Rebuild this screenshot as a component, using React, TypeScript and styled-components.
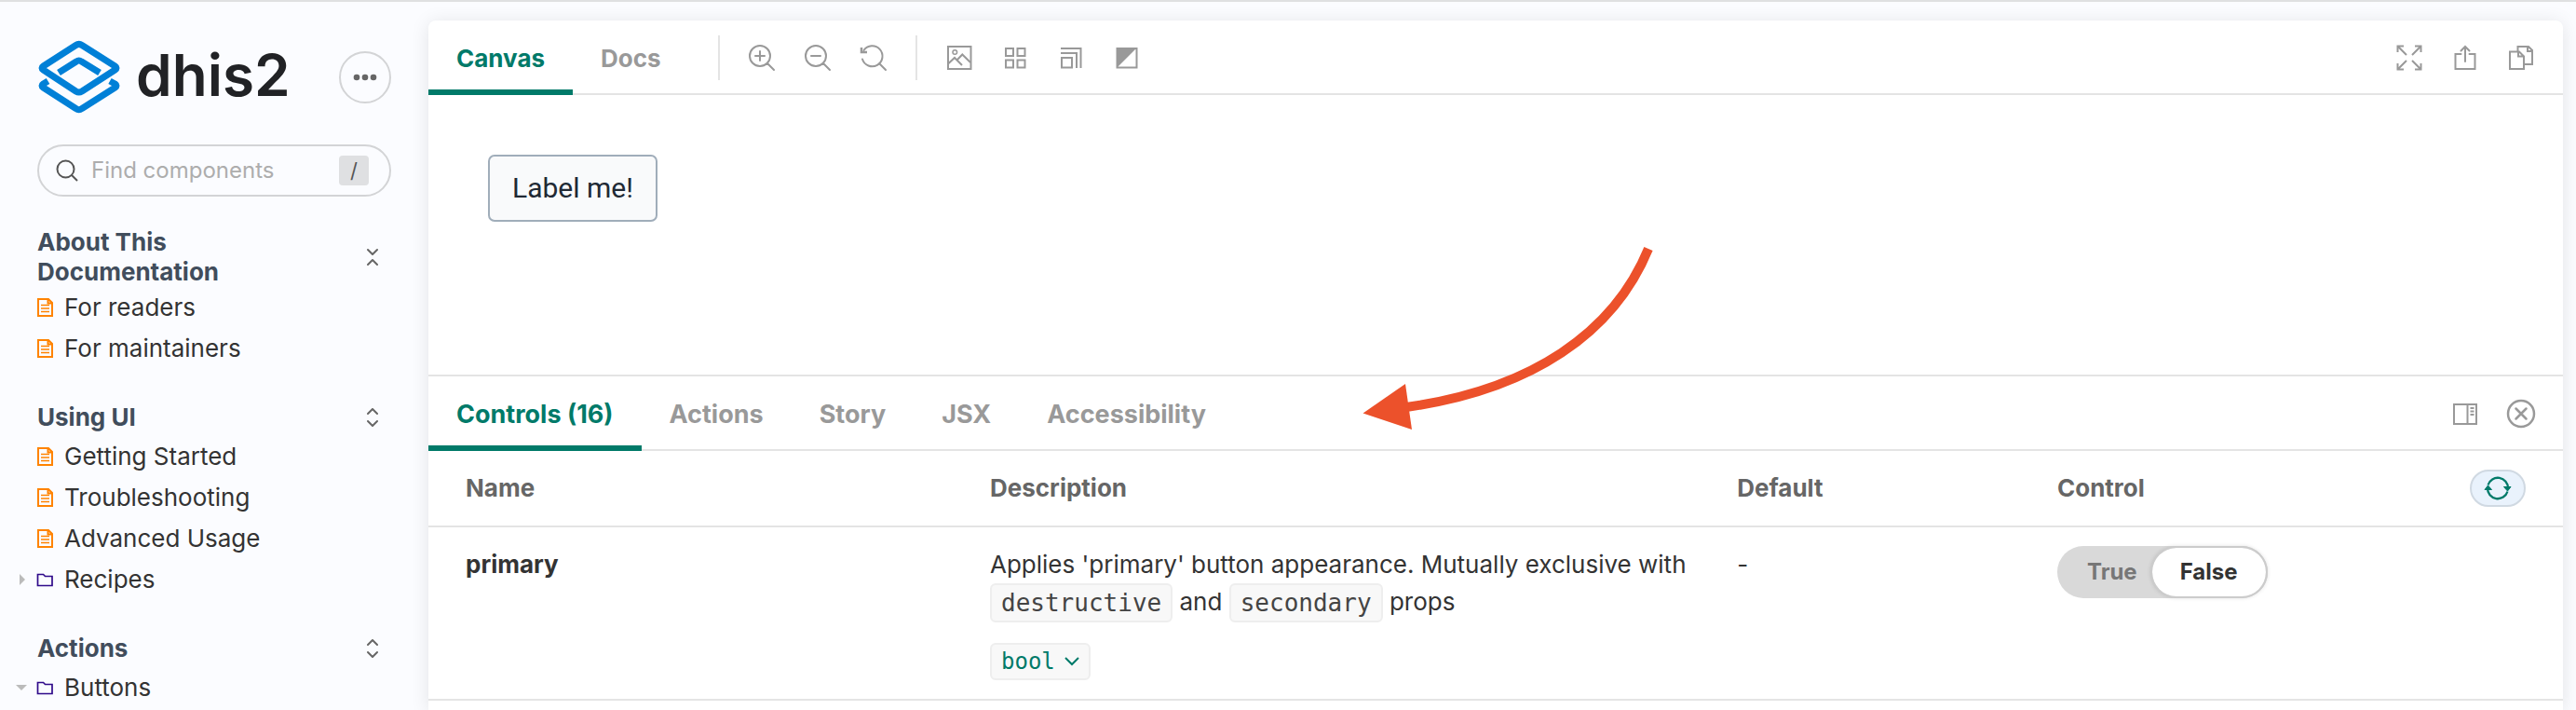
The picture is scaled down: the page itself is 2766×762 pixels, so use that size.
import React from 'react';
import styled, { createGlobalStyle, css } from 'styled-components';

const color = {
  page: '#fbfcff',
  line: '#e4e4e4',
  accent: '#007a69',
  muted: '#999999',
  text: '#333333',
  heading: '#414d5c',
};
const sans = `Inter, "Liberation Sans", sans-serif`;
const mono = `"DejaVu Sans Mono", "Liberation Mono", monospace`;

const GlobalStyle = createGlobalStyle`
  *, *::before, *::after { box-sizing: border-box; }
  body {
    margin: 0;
    background: ${color.page};
    color: ${color.text};
    font-family: ${sans};
    font-size: 26px;
    line-height: 40px;
  }
  button, input { font: inherit; }
  button { cursor: pointer; }
`;

const Shell = styled.div`
  display: flex;
  min-height: 100vh;
  border-top: 2px solid #dfe0e1;
`;

/* Sidebar */

const Sidebar = styled.aside`
  flex: none;
  width: 460px;
  padding: 41px 40px 0;
`;

const Brand = styled.header`
  display: flex;
  align-items: center;
  height: 80px;
  margin-bottom: 32px;
`;

const BrandLink = styled.a`
  display: flex;
  align-items: center;
  gap: 16px;
  color: #212225;
  font-size: 62px;
  line-height: 72px;
  font-weight: 600;
  text-decoration: none;
`;

const Wordmark = styled.span`
  padding-bottom: 4px;
`;

const MenuButton = styled.button`
  display: grid;
  place-items: center;
  width: 56px;
  height: 56px;
  margin-left: auto;
  padding: 0;
  border: 2px solid #d3d4d6;
  border-radius: 50%;
  background: none;
`;

const SearchField = styled.label`
  display: flex;
  align-items: center;
  gap: 14px;
  height: 56px;
  padding: 0 22px 0 18px;
  border: 2px solid #d3d4d6;
  border-radius: 28px;
`;

const SearchInput = styled.input`
  flex: 1;
  min-width: 0;
  padding: 0;
  border: 0;
  outline: 0;
  background: none;
  color: ${color.text};
  font-size: 24px;
  &::placeholder { color: #adadad; opacity: 1; }
`;

const Key = styled.kbd`
  width: 32px;
  height: 32px;
  border-radius: 4px;
  background: #dfe0e2;
  color: #555;
  font-family: ${sans};
  font-size: 22px;
  line-height: 32px;
  text-align: center;
`;

const Tree = styled.nav`
  display: flex;
  flex-direction: column;
  gap: 32px;
  padding-top: 33px;
`;

const SectionHead = styled.div`
  display: flex;
  align-items: center;
  justify-content: space-between;
  min-height: 40px;
  padding-right: 14px;
`;

const SectionTitle = styled.h2`
  max-width: 240px;
  margin: 0;
  color: ${color.heading};
  font-size: 26px;
  line-height: 32px;
  font-weight: 700;
`;

const FoldButton = styled.button`
  display: flex;
  padding: 0;
  border: 0;
  background: none;
`;

const ItemList = styled.ul`
  margin: 0;
  padding: 0;
  list-style: none;
`;

const ItemLink = styled.a`
  display: flex;
  align-items: center;
  height: 44px;
  margin-left: -24px;
  color: ${color.text};
  font-size: 26px;
  text-decoration: none;
`;

const CaretSlot = styled.span`
  display: flex;
  justify-content: center;
  width: 14px;
  margin-right: 9px;
`;

const KindIcon = styled.svg`
  width: 18px;
  height: 20px;
  margin-right: 12px;
`;

/* Main panel */

const Main = styled.main`
  position: relative;
  flex: 1;
  min-width: 0;
  margin: 20px 14px 0 0;
  border-radius: 8px 8px 0 0;
  background: #fff;
  box-shadow: 0 2px 20px rgba(0, 0, 0, 0.1);
`;

const Bar = styled.div<{ $size: number }>`
  display: flex;
  align-items: center;
  justify-content: space-between;
  height: 80px;
  padding-right: 31px;
  box-shadow: inset 0 -2px ${color.line};
  font-size: ${(p) => p.$size}px;
`;

const BarGroup = styled.div<{ $gap?: number }>`
  display: flex;
  align-items: center;
  gap: ${(p) => p.$gap ?? 0}px;
`;

const Tab = styled.button<{ $active?: boolean }>`
  height: 80px;
  padding: 8px 30px 0;
  border: 0;
  border-bottom: 6px solid transparent;
  background: none;
  color: ${color.muted};
  font-weight: 700;
  ${(p) => p.$active && css`
    color: ${color.accent};
    border-bottom-color: ${color.accent};
  `}
`;

const Divider = styled.span`
  width: 2px;
  height: 48px;
  margin: 0 31px;
  background: ${color.line};
`;

const IconButton = styled.button`
  display: flex;
  padding: 0;
  border: 0;
  background: none;
  color: ${color.muted};
`;

const Icon = styled.svg`
  width: 28px;
  height: 28px;
  overflow: visible;
  fill: none;
  stroke: currentColor;
  stroke-width: 2;
`;

const Preview = styled.section`
  height: 300px;
  padding: 64px;
`;

const DemoButton = styled.button`
  height: 72px;
  padding: 0 24px;
  border: 2px solid #a0adba;
  border-radius: 7px;
  background: #f9fafb;
  color: #212934;
  font-family: Roboto, sans-serif;
  font-size: 30px;
`;

const Addons = styled.section`
  border-top: 2px solid ${color.line};
`;

const PropTable = styled.table`
  width: 100%;
  border-collapse: separate;
  border-spacing: 0;
  table-layout: fixed;
  font-size: 26px;
  text-align: left;
`;

const HeadCell = styled.th<{ $width: string }>`
  width: ${(p) => p.$width};
  height: 82px;
  padding: 0 20px 0 30px;
  border-bottom: 2px solid ${color.line};
  color: #666;
  font-weight: 700;
  &:first-child { padding-left: 40px; }
  &:last-child { padding-right: 40px; }
`;

const HeadSplit = styled.div`
  display: flex;
  align-items: center;
  justify-content: space-between;
`;

const Cell = styled.td<{ $strong?: boolean }>`
  padding: 20px 20px 20px 30px;
  border-bottom: 2px solid ${color.line};
  font-weight: ${(p) => (p.$strong ? 700 : 400)};
  vertical-align: top;
  &:first-child { padding-left: 40px; }
`;

const Description = styled.p`
  margin: 0 0 22px;
`;

const Code = styled.code`
  display: inline-block;
  height: 42px;
  padding: 0 10px;
  border: 2px solid #eeeeee;
  border-radius: 6px;
  background: #f8f8f8;
  color: #444;
  font-family: ${mono};
  font-size: 26px;
  line-height: 38px;
  vertical-align: top;
`;

const TypeButton = styled.button`
  display: flex;
  align-items: center;
  gap: 10px;
  height: 40px;
  padding: 0 10px;
  border: 2px solid #eeeeee;
  border-radius: 6px;
  background: #f8f8f8;
  color: ${color.accent};
  font-family: ${mono};
  font-size: 24px;
`;

const ResetButton = styled.button`
  display: grid;
  place-items: center;
  width: 60px;
  height: 40px;
  padding: 0;
  border: 2px solid #d0d9e2;
  border-radius: 20px;
  background: #e9f2fc;
  color: ${color.accent};
`;

const Toggle = styled.label`
  position: relative;
  display: inline-flex;
  height: 56px;
  border-radius: 28px;
  background: #d9d9d9;
  cursor: pointer;
`;

const ToggleInput = styled.input`
  position: absolute;
  inset: 0;
  width: 100%;
  height: 100%;
  margin: 0;
  opacity: 0;
`;

const ToggleOption = styled.span<{ $on?: boolean }>`
  display: flex;
  align-items: center;
  padding: 0 14px 0 32px;
  border-radius: 28px;
  color: #777;
  font-size: 24px;
  font-weight: 700;
  ${(p) => p.$on && css`
    padding: 0 30px;
    border: 2px solid #cccccc;
    background: #fff;
    background-clip: padding-box;
    color: ${color.text};
    box-shadow: 0 0 4px rgba(0, 0, 0, 0.12);
  `}
`;

const Pointer = styled.svg`
  position: absolute;
  left: 1000px;
  top: 240px;
  width: 320px;
  height: 206px;
  pointer-events: none;
`;

const LogoMark = () => (
  <svg width="90" height="80" viewBox="40 43 90 80" fill="none" stroke="#0080d7" strokeWidth="7" strokeLinejoin="round" aria-hidden="true">
    <path d="M81.500 48.500Q84.700 46.300 88 48.500L123.500 71Q126.500 73 123.500 75L88 98Q84.700 100 81.500 98L46.500 75Q43.500 73 46.500 71Z" />
    <path d="M63 78L82 66Q84.700 64 87.500 66L107 78" />
    <path d="M51.500 87L46.500 90Q43.500 92 46.500 94L81.500 116.500Q84.700 119 88 116.500L123.500 94Q126.500 92 123.500 90L118 87" />
  </svg>
);

const FoldIcon = ({ open }: { open?: boolean }) => (
  <svg width="12" height="20" viewBox="0 0 12 20" fill="none" stroke="#666" strokeWidth="2" strokeLinecap="round" strokeLinejoin="round" aria-hidden="true">
    <path d={open ? 'M1 2L6 7L11 2M1 18L6 13L11 18' : 'M1 6L6 1L11 6M1 14L6 19L11 14'} />
  </svg>
);

const glyphs = {
  zoomIn: <path d="M20 20L27 27M7 12H17M12 7V17M23 12A11 11 0 1 1 1 12A11 11 0 1 1 23 12" strokeLinecap="round" />,
  zoomOut: <path d="M20 20L27 27M7 12H17M23 12A11 11 0 1 1 1 12A11 11 0 1 1 23 12" strokeLinecap="round" />,
  zoomReset: (
    <>
      <path d="M20 20L27 27M2 15.500A11 11 0 1 0 3.500 6" strokeLinecap="round" />
      <path d="M1 3V8H7" strokeWidth="2.500" />
    </>
  ),
  image: (
    <>
      <path d="M2 2H26.500V26H2Z" />
      <circle cx="9.300" cy="8" r="2.300" strokeWidth="1.500" />
      <path d="M2 20.500L9 14L17 22M12 16L17.300 10.500L26 19" />
    </>
  ),
  grid: <path d="M4 4H12V12H4ZM16.500 4H24.500V12H16.500ZM4 16.500H12V24.500H4ZM16.500 16.500H24.500V24.500H16.500Z" />,
  viewport: <path d="M3 4H24.500V25M3 9H20V25M4 14H15V24.500H4Z" />,
  contrast: (
    <>
      <path d="M3.500 4H24.500V24.500H3.500Z" />
      <path d="M3 3H25L3 25Z" fill="currentColor" stroke="none" />
    </>
  ),
  expand: <path d="M2 2L11 11M26 2L17 11M2 26L11 17M26 26L17 17M1.500 8V1.500H8M20 1.500H26.500V8M1.500 20V26.500H8M20 26.500H26.500V20" />,
  share: <path d="M9.500 10H3.500V26H24.500V10H18.500M14 18V2M9.500 6.500L14 2L18.500 6.500" strokeLinecap="round" />,
  copy: <path d="M2 7.500H12L17 12.500V26H2ZM11 7.500V12.500H17M10.500 6.500V2H22L26 6V21H18M21 2V7H26" />,
  panelRight: (
    <>
      <path d="M2 4H26V25H2ZM16.500 4V25" />
      <path d="M19.500 8H23.500M19.500 11.500H23.500M19.500 15H23.500" />
    </>
  ),
  close: <path d="M28 14A14 14 0 1 1 0 14A14 14 0 1 1 28 14M8.500 8.500L19.500 19.500M19.500 8.500L8.500 19.500" strokeWidth="2.500" strokeLinecap="round" />,
  sync: (
    <>
      <path d="M3.500 10.500A11 11 0 0 1 25 14M24.500 17.500A11 11 0 0 1 3 14" strokeWidth="2.300" />
      <path d="M20.500 12.500H28L24.500 17ZM0 15.500L3.500 11L7.500 15.500Z" fill="currentColor" strokeWidth="1" />
    </>
  ),
};

type Glyph = keyof typeof glyphs;

const GlyphIcon = ({ name }: { name: Glyph }) => (
  <Icon viewBox="0 0 28 28" aria-hidden="true">{glyphs[name]}</Icon>
);

const ToolButton = ({ name, label }: { name: Glyph; label: string }) => (
  <IconButton type="button" aria-label={label}>
    <GlyphIcon name={name} />
  </IconButton>
);

type Item = { label: string; folder?: 'open' | 'closed' };

const sections: { title: string; open?: boolean; items: Item[] }[] = [
  { title: 'About This Documentation', open: true, items: [{ label: 'For readers' }, { label: 'For maintainers' }] },
  {
    title: 'Using UI',
    items: [
      { label: 'Getting Started' },
      { label: 'Troubleshooting' },
      { label: 'Advanced Usage' },
      { label: 'Recipes', folder: 'closed' },
    ],
  },
  { title: 'Actions', items: [{ label: 'Buttons', folder: 'open' }] },
];

const TreeItem = ({ label, folder }: Item) => (
  <li>
    <ItemLink href="#">
      <CaretSlot>
        {folder && (
          <svg width="12" height="12" viewBox="0 0 12 12" fill="#bbb" aria-hidden="true">
            <path d={folder === 'open' ? 'M0 3H12L6 9Z' : 'M4 0L10 6L4 12Z'} />
          </svg>
        )}
      </CaretSlot>
      {folder ? (
        <KindIcon viewBox="0 0 18 20" fill="none" stroke="#2f0a8a" strokeWidth="1.700" aria-hidden="true">
          <path d="M1.500 4.500H7.500L9.500 6.500H17V16.500H1.500Z" />
        </KindIcon>
      ) : (
        <KindIcon viewBox="0 0 18 20" fill="none" stroke="#ff8300" strokeWidth="2" aria-hidden="true">
          <path d="M2 1H13L17 5V19H2ZM12.500 1V5.500H17" />
          <path d="M5 7.500H14M5 11H14M5 14.500H14" strokeWidth="1.700" />
        </KindIcon>
      )}
      {label}
    </ItemLink>
  </li>
);

export default function App() {
  const [primary, setPrimary] = React.useState(false);
  return (
    <>
      <GlobalStyle />
      <Shell>
        <Sidebar>
          <Brand>
            <BrandLink href="#">
              <LogoMark />
              <Wordmark>dhis2</Wordmark>
            </BrandLink>
            <MenuButton type="button" aria-label="Shortcuts">
              <svg width="26" height="8" viewBox="0 0 26 8" fill="#666" aria-hidden="true">
                <circle cx="4" cy="4" r="3.300" />
                <circle cx="13" cy="4" r="3.300" />
                <circle cx="22" cy="4" r="3.300" />
              </svg>
            </MenuButton>
          </Brand>
          <SearchField>
            <svg width="24" height="24" viewBox="0 0 24 24" fill="none" stroke="#555" strokeWidth="2" aria-hidden="true">
              <circle cx="10.500" cy="10.500" r="9" />
              <path d="M17 17L23 23" />
            </svg>
            <SearchInput type="text" placeholder="Find components" aria-label="Find components" />
            <Key>/</Key>
          </SearchField>
          <Tree>
            {sections.map((section) => (
              <section key={section.title}>
                <SectionHead>
                  <SectionTitle>{section.title}</SectionTitle>
                  <FoldButton type="button" aria-label={`Toggle ${section.title}`}>
                    <FoldIcon open={section.open} />
                  </FoldButton>
                </SectionHead>
                <ItemList>
                  {section.items.map((item) => <TreeItem key={item.label} {...item} />)}
                </ItemList>
              </section>
            ))}
          </Tree>
        </Sidebar>

        <Main>
          <Bar $size={26}>
            <BarGroup>
              <Tab type="button" $active>Canvas</Tab>
              <Tab type="button">Docs</Tab>
              <Divider />
              <BarGroup $gap={32}>
                <ToolButton name="zoomIn" label="Zoom in" />
                <ToolButton name="zoomOut" label="Zoom out" />
                <ToolButton name="zoomReset" label="Reset zoom" />
              </BarGroup>
              <Divider />
              <BarGroup $gap={32}>
                <ToolButton name="image" label="Change background" />
                <ToolButton name="grid" label="Apply a grid" />
                <ToolButton name="viewport" label="Change viewport" />
                <ToolButton name="contrast" label="Change theme" />
              </BarGroup>
            </BarGroup>
            <BarGroup $gap={32}>
              <ToolButton name="expand" label="Go full screen" />
              <ToolButton name="share" label="Open in new tab" />
              <ToolButton name="copy" label="Copy link" />
            </BarGroup>
          </Bar>

          <Preview>
            <DemoButton type="button">Label me!</DemoButton>
          </Preview>

          <Addons>
            <Bar $size={27}>
              <BarGroup>
                <Tab type="button" $active>Controls (16)</Tab>
                <Tab type="button">Actions</Tab>
                <Tab type="button">Story</Tab>
                <Tab type="button">JSX</Tab>
                <Tab type="button">Accessibility</Tab>
              </BarGroup>
              <BarGroup $gap={32}>
                <ToolButton name="panelRight" label="Change orientation" />
                <ToolButton name="close" label="Hide addons" />
              </BarGroup>
            </Bar>
            <PropTable>
              <thead>
                <tr>
                  <HeadCell $width="25%">Name</HeadCell>
                  <HeadCell $width="35%">Description</HeadCell>
                  <HeadCell $width="15%">Default</HeadCell>
                  <HeadCell $width="25%">
                    <HeadSplit>
                      Control
                      <ResetButton type="button" aria-label="Reset controls">
                        <GlyphIcon name="sync" />
                      </ResetButton>
                    </HeadSplit>
                  </HeadCell>
                </tr>
              </thead>
              <tbody>
                <tr>
                  <Cell $strong>primary</Cell>
                  <Cell>
                    <Description>
                      Applies 'primary' button appearance. Mutually exclusive with{' '}
                      <Code>destructive</Code> and <Code>secondary</Code> props
                    </Description>
                    <TypeButton type="button">
                      bool
                      <svg width="16" height="10" viewBox="0 0 16 10" fill="none" stroke="currentColor" strokeWidth="2" aria-hidden="true">
                        <path d="M1 1L8 8L15 1" />
                      </svg>
                    </TypeButton>
                  </Cell>
                  <Cell>-</Cell>
                  <Cell>
                    <Toggle>
                      <ToggleInput
                        type="checkbox"
                        aria-label="primary"
                        checked={primary}
                        onChange={(event) => setPrimary(event.target.checked)}
                      />
                      <ToggleOption $on={primary}>True</ToggleOption>
                      <ToggleOption $on={!primary}>False</ToggleOption>
                    </Toggle>
                  </Cell>
                </tr>
              </tbody>
            </PropTable>
          </Addons>

          <Pointer viewBox="1460 262 320 206" aria-hidden="true">
            <path d="M1770 267C1733 357 1645 418 1510 437" fill="none" stroke="#ec512b" strokeWidth="10" />
            <path d="M1463.500 443.500L1509 412L1516 461Z" fill="#ec512b" />
          </Pointer>
        </Main>
      </Shell>
    </>
  );
}
